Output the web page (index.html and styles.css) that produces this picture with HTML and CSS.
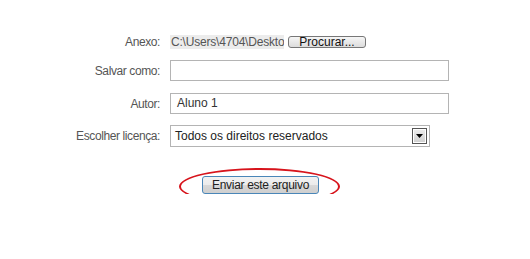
FILE: index.html
```html
<!DOCTYPE html>
<html>
<head>
<meta charset="utf-8">
<link rel="stylesheet" href="styles.css">
</head>
<body>
<form class="form">
  <div class="row row-file">
    <span class="label">Anexo:</span>
    <div class="file">
      <span class="file-path">C:\Users\4704\Desktop</span>
      <span class="browse">Procurar...</span>
    </div>
  </div>
  <div class="row row-salvar">
    <span class="label">Salvar como:</span>
    <div class="input"></div>
  </div>
  <div class="row row-autor">
    <span class="label">Autor:</span>
    <div class="input">Aluno 1</div>
  </div>
  <div class="row row-select">
    <span class="label">Escolher licença:</span>
    <div class="select">
      <span class="select-text">Todos os direitos reservados</span>
      <span class="arrow"><svg width="7" height="4" viewBox="0 0 7 4"><path d="M0 0H7L3.5 4Z" fill="#000"/></svg></span>
    </div>
  </div>
  <div class="submit-wrap">
    <span class="submit">Enviar este arquivo</span>
    <span class="ring"></span>
  </div>
</form>
</body>
</html>
```
FILE: styles.css
```css
html, body {
  margin: 0;
  background: #fff;
}
body {
  font-family: "Liberation Sans", Arial, sans-serif;
  font-size: 12px;
  color: #555;
}
.form {
  padding-top: 35px;
  display: flex;
  flex-direction: column;
}
.row {
  display: grid;
  grid-template-columns: 160px auto;
  column-gap: 10px;
  align-items: center;
}
.row-salvar { margin-top: 11px; }
.row-autor { margin-top: 12px; }
.row-select { margin-top: 11px; }
.label {
  text-align: right;
  color: #555;
  line-height: 14px;
  letter-spacing: -0.4px;
}
.file {
  display: flex;
  align-items: center;
  height: 14px;
}
.file-path {
  width: 114px;
  height: 14px;
  line-height: 14px;
  background: #ececec;
  color: #555;
  overflow: hidden;
  white-space: nowrap;
  padding-left: 1px;
  box-sizing: border-box;
  letter-spacing: -0.2px;
}
.browse {
  margin-left: 4px;
  width: 78px;
  height: 12px;
  box-sizing: border-box;
  border: 1px solid #777;
  border-radius: 3px;
  background: linear-gradient(#f6f6f6, #dcdcdc);
  color: #111;
  font-size: 12px;
  line-height: 10px;
  text-align: center;
}
.input {
  width: 279px;
  height: 21px;
  box-sizing: border-box;
  border: 1px solid #b4b4b4;
  padding: 0 6px;
  line-height: 19px;
  color: #333;
}
.select {
  width: 260px;
  height: 22px;
  box-sizing: border-box;
  border: 1px solid #b4b4b4;
  display: flex;
  align-items: center;
  justify-content: space-between;
  padding: 0 2px 0 4px;
  color: #222;
}
.arrow {
  width: 15px;
  height: 16px;
  box-sizing: border-box;
  border: 1px solid #555;
  background: linear-gradient(#eee, #cfcfcf);
  display: flex;
  align-items: center;
  justify-content: center;
  box-shadow: inset 0 0 0 1px #fff;
}
.submit-wrap {
  position: relative;
  align-self: flex-start;
  margin-left: 202px;
  margin-top: 29px;
}
.submit {
  display: block;
  width: 117px;
  height: 18px;
  box-sizing: border-box;
  border: 1px solid #4a86b8;
  border-radius: 3px;
  background: linear-gradient(#f2f2f2 0%, #ebebeb 50%, #d8d8d8 51%, #cfcfcf 100%);
  color: #222;
  text-align: center;
  line-height: 16px;
  font-size: 12px;
  letter-spacing: -0.3px;
}
.ring {
  position: absolute;
  left: -23px;
  top: -8px;
  width: 161px;
  height: 37px;
  box-sizing: border-box;
  border: 2px solid #d7141c;
  border-radius: 50%;
}
```
